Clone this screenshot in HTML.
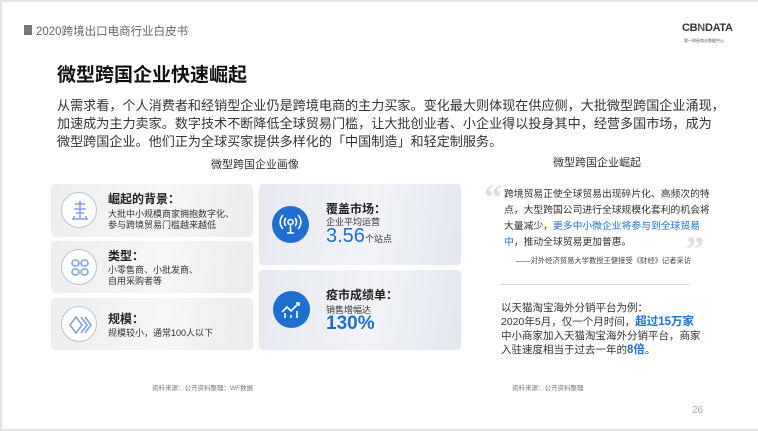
<!DOCTYPE html>
<html><head><meta charset="utf-8"><style>
*{margin:0;padding:0;box-sizing:border-box}
body{width:758px;height:431px;background:#fff;font-family:"Liberation Sans","Noto Sans CJK SC",sans-serif;color:#333;position:relative;overflow:hidden}
.frame{position:absolute;left:0;top:0;width:758px;height:431px;border:2px solid #e2e2e2;border-right:none}
.a{position:absolute;white-space:nowrap}
.card{position:absolute;background:linear-gradient(100deg,#eeeeef 0%,#f6f6f7 55%,#ececee 100%);border-radius:4px}
.rc{background:linear-gradient(100deg,#e6e9ef 0%,#f1f3f7 55%,#e3e7ee 100%)}
.ic{position:absolute;left:10px;width:36px;height:36px;border-radius:50%;background:#fff;border:1px solid #b8c2d6}
.bi{position:absolute;left:10px;width:37px;height:37px;border-radius:50%;background:#1f6fd0}
.t{font-weight:bold;font-size:12px;color:#222}
.s{font-size:9px;color:#333;line-height:11px}
.blue{color:#1f6fd0}
</style></head><body>
<div class="frame"></div>
<div class="a" style="left:24px;top:25px;width:8px;height:10px;background:#777"></div>
<div class="a" style="left:36px;top:23px;font-size:11.5px;color:#666">2020跨境出口电商行业白皮书</div>
<div class="a" style="left:682px;top:22px;font-size:11px;font-weight:bold;color:#333;letter-spacing:-0.3px">CB<span style="color:#555">N</span>DATA</div>
<div class="a" style="left:684px;top:38px;font-size:4px;color:#555">第一财经商业数据中心</div>
<div class="a" style="left:57px;top:60px;font-size:19px;font-weight:bold;color:#111">微型跨国企业快速崛起</div>
<div class="a" style="left:57px;top:97px;font-size:13.1px;line-height:18px;color:#333">从需求看，个人消费者和经销型企业仍是跨境电商的主力买家。变化最大则体现在供应侧，大批微型跨国企业涌现，<br>加速成为主力卖家。数字技术不断降低全球贸易门槛，让大批创业者、小企业得以投身其中，经营多国市场，成为<br>微型跨国企业。他们正为全球买家提供多样化的「中国制造」和轻定制服务。</div>
<div class="a" style="left:211px;top:156px;font-size:11px;color:#333">微型跨国企业画像</div>

<div class="card" style="left:51px;top:184px;width:202px;height:53px">
 <div class="ic" style="top:8px"><svg width="36" height="36" viewBox="0 0 36 36"><g fill="none" stroke="#7fa4e0" stroke-width="1.6"><path d="M18 8v18M13 11h10M12 16h12M14 20h8M10 26h16M12 23v3M24 23v3"/></g></svg></div>
 <div class="a t" style="left:57px;top:6px">崛起的背景：</div>
 <div class="a s" style="left:57px;top:25px">大批中小规模商家拥抱数字化、<br>参与跨境贸易门槛越来越低</div>
</div>
<div class="card" style="left:51px;top:241px;width:202px;height:52px">
 <div class="ic" style="top:8px"><svg width="36" height="36" viewBox="0 0 36 36"><g fill="none" stroke="#7fa4e0" stroke-width="1.6"><rect x="10" y="10" width="7" height="6" rx="3"/><rect x="19" y="10" width="7" height="6" rx="3"/><rect x="10" y="19" width="7" height="6" rx="3"/><rect x="19" y="19" width="7" height="6" rx="3"/></g></svg></div>
 <div class="a t" style="left:57px;top:6px">类型：</div>
 <div class="a s" style="left:57px;top:24px">小零售商、小批发商、<br>自用采购者等</div>
</div>
<div class="card" style="left:51px;top:298px;width:202px;height:52px">
 <div class="ic" style="top:8px"><svg width="36" height="36" viewBox="0 0 36 36"><g fill="none" stroke="#7fa4e0" stroke-width="1.6"><path d="M14 10l-6 8 6 8 6-8z M19 10l6 8-6 8M23 10l6 8-6 8"/></g></svg></div>
 <div class="a t" style="left:57px;top:12px">规模：</div>
 <div class="a s" style="left:57px;top:30px">规模较小，通常100人以下</div>
</div>

<div class="card rc" style="left:259px;top:184px;width:202px;height:81px">
 <div class="bi" style="top:22px;left:13px"><svg width="37" height="37" viewBox="0 0 37 37"><g fill="none" stroke="#fff" stroke-width="1.6"><circle cx="18.5" cy="16" r="2.5"/><path d="M14 12a6 6 0 0 0 0 8M23 12a6 6 0 0 1 0 8M11 9a10 10 0 0 0 0 14M26 9a10 10 0 0 1 0 14M18.5 18v9M15 27h7"/></g></svg></div>
 <div class="a t" style="left:67px;top:16px">覆盖市场：</div>
 <div class="a s" style="left:67px;top:33px">企业平均运营</div>
 <div class="a" style="left:67px;top:41px;font-size:20px;color:#1f6fd0">3.56<span style="font-size:9px;color:#333">个站点</span></div>
</div>
<div class="card rc" style="left:259px;top:270px;width:202px;height:80px">
 <div class="bi" style="top:21px;left:14px"><svg width="37" height="37" viewBox="0 0 37 37"><g fill="none" stroke="#fff" stroke-width="1.6"><path d="M9 21l5-5 4 4 8-8M23 12h3v3M12 22v5M18 24v3M24 20v7"/></g></svg></div>
 <div class="a t" style="left:67px;top:16px">疫市成绩单：</div>
 <div class="a s" style="left:67px;top:35px">销售增幅达</div>
 <div class="a" style="left:67px;top:43px;font-size:19px;font-weight:bold;color:#1f6fd0">130%</div>
</div>

<div class="a" style="left:553px;top:154px;font-size:11px;color:#333">微型跨国企业崛起</div>
<div class="a" style="left:484px;top:176px;font-size:36px;font-weight:bold;color:#ddd;font-family:'Liberation Serif',serif">“</div>
<div class="a" style="left:686px;top:228px;font-size:36px;font-weight:bold;color:#ddd;font-family:'Liberation Serif',serif">”</div>
<div class="a" style="left:504px;top:187px;font-size:9.8px;line-height:16px;color:#333">跨境贸易正使全球贸易出现碎片化、高频次的特<br>点，大型跨国公司进行全球规模化套利的机会将<br>大量减少，<span class="blue">更多中小微企业将参与到全球贸易</span><br><span class="blue">中</span>，推动全球贸易更加普惠。</div>
<div class="a" style="left:516px;top:256px;font-size:7.3px;color:#444">——对外经济贸易大学教授王健接受《财经》记者采访</div>
<div class="a" style="left:501px;top:284px;width:189px;height:1px;background:#ddd"></div>
<div class="a" style="left:501px;top:301px;font-size:10.5px;line-height:14px;color:#333">以天猫淘宝海外分销平台为例：<br>2020年5月，仅一个月时间，<span class="blue" style="font-weight:bold;font-size:11.5px">超过15万家</span><br>中小商家加入天猫淘宝海外分销平台，商家<br>入驻速度相当于过去一年的<span class="blue" style="font-weight:bold;font-size:11.5px">8倍</span>。</div>

<div class="a" style="left:152px;top:382px;font-size:6.5px;color:#777">资料来源：公开资料整理：WF数据</div>
<div class="a" style="left:512px;top:382px;font-size:6.5px;color:#777">资料来源：公开资料整理</div>
<div class="a" style="left:692px;top:405px;font-size:10px;color:#aaa">26</div>
</body></html>
